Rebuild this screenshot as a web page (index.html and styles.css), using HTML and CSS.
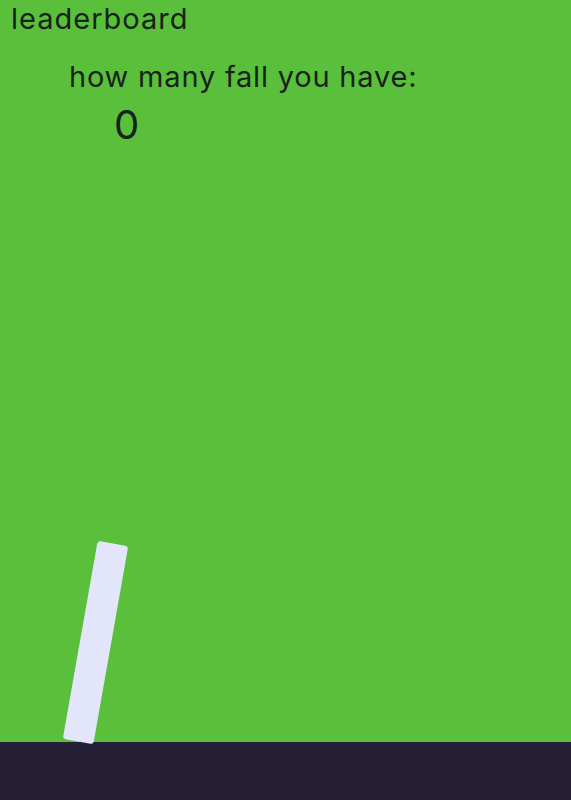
FILE: index.html
```html
<!DOCTYPE html>
<html lang="en">
<head>
    <meta charset="UTF-8">
    <meta name="viewport" content="width=device-width, initial-scale=1.0">
    <title>fall</title>
    <link rel="stylesheet" href="styles.css">
</head>
<body>
    <div class="game">
        <a class="leaderboard" href="#">leaderboard</a>
        <div class="score">
            <div class="score-label">how many fall you have:</div>
            <div class="score-value" id="falls">0</div>
        </div>
        <div class="field">
            <div class="pole"></div>
        </div>
        <div class="ground"></div>
    </div>
</body>
</html>
```

FILE: styles.css
```css
body {
    margin: 0;
    font-family: Inter, "Noto Sans", sans-serif;
    color: #17221b;
}

.game {
    display: flex;
    flex-direction: column;
    height: 800px;
    background: #5abf3a;
}

.leaderboard {
    display: block;
    padding: 1px 0 0 11px;
    font-size: 29px;
    line-height: 36px;
    letter-spacing: 1px;
    color: inherit;
    text-decoration: none;
}

.score {
    padding: 22px 0 0 69px;
}

.score-label {
    font-size: 29px;
    line-height: 36px;
    letter-spacing: 0.8px;
}

.score-value {
    padding: 7px 0 0 45px;
    font-size: 40px;
    line-height: 46px;
    letter-spacing: 1px;
}

.field {
    position: relative;
    flex: 1;
}

/* the falling pole, tilted as it tips over */
.pole {
    position: absolute;
    left: 80px;
    bottom: 0;
    width: 31px;
    height: 201px;
    margin-bottom: -1px;
    background: #e3e6fb;
    border-radius: 3px;
    transform: rotate(10deg);
    transform-origin: 50% 50%;
}

.ground {
    height: 58px;
    background: #252036;
}
```
